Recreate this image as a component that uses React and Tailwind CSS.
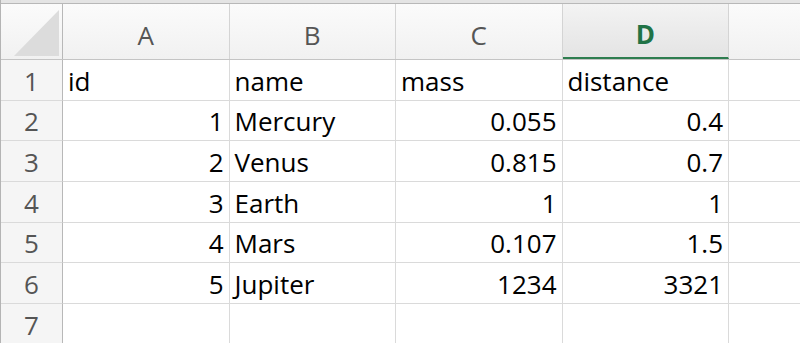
const cols = ['A', 'B', 'C', 'D'];

const rows = [
  ['id', 'name', 'mass', 'distance'],
  [1, 'Mercury', 0.055, 0.4],
  [2, 'Venus', 0.815, 0.7],
  [3, 'Earth', 1, 1],
  [4, 'Mars', 0.107, 1.5],
  [5, 'Jupiter', 1234, 3321],
  [],
];

function Cell({ value }) {
  const isNum = typeof value === 'number';
  return (
    <div
      className={`w-[166.5px] shrink-0 border-r border-b border-[#dadada] flex items-center px-[5px] pt-[2px] ${
        isNum ? 'justify-end' : 'justify-start'
      }`}
    >
      {value}
    </div>
  );
}

export default function App() {
  return (
    <div className="w-[800px] h-[343px] overflow-hidden bg-white text-black font-['Open_Sans',sans-serif] text-[26px] leading-none border-l border-[#b4b4b4]">
      <div className="h-[4px] bg-[#e4e4e4] border-b border-[#b8b8b8]" />

      {/* column headers */}
      <div className="flex h-[56px] bg-gradient-to-b from-[#fbfbfb] to-[#f1f1f1] border-b border-[#c4c4c4] text-[#555]">
        <div className="relative w-[62px] shrink-0 border-r border-[#b8b8b8]">
          <svg className="absolute left-0 top-0" width="62" height="56" viewBox="0 0 62 56">
            <polygon points="13,52 58,6 58,52" fill="#dcdcdc" />
          </svg>
        </div>
        {cols.map((c) => (
          <div
            key={c}
            className={`w-[166.5px] shrink-0 border-r border-[#d4d4d4] flex items-center justify-center pt-[6px] ${
              c === 'D'
                ? 'bg-gradient-to-b from-[#f3f3f3] to-[#e4e4e4] text-[#217346] font-bold border-b-2 border-b-[#2e7d4f]'
                : ''
            }`}
          >
            {c}
          </div>
        ))}
        <div className="flex-1" />
      </div>

      {/* rows */}
      {rows.map((r, i) => (
        <div key={i} className="flex h-[40.67px]">
          <div className="w-[62px] shrink-0 bg-[#f5f5f5] border-r border-b border-r-[#b8b8b8] border-b-[#dadada] flex items-center justify-center text-[#555] pt-[2px]">
            {i + 1}
          </div>
          {cols.map((c, j) => (
            <Cell key={c} value={r[j]} />
          ))}
          <div className="flex-1 border-b border-[#dadada]" />
        </div>
      ))}
    </div>
  );
}
